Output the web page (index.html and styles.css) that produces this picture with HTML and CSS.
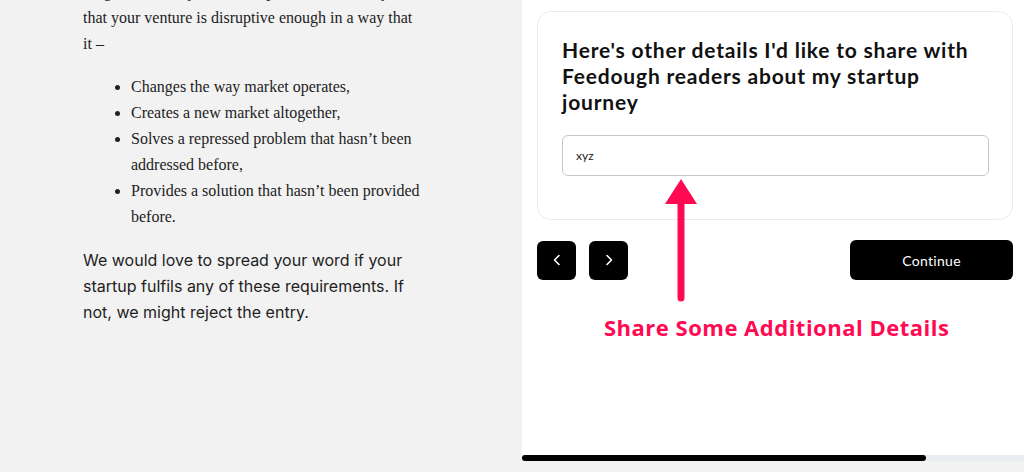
FILE: index.html
```html
<!DOCTYPE html>
<html>
<head>
<meta charset="utf-8">
<link rel="stylesheet" href="styles.css">
</head>
<body>
<div class="page">
  <div class="article">
    <div class="article-inner">
      <p class="serif">To get featured, you need to prove to us, clearly,</p>
      <p class="serif">that your venture is disruptive enough in a way that it –</p>
      <ul class="serif list">
        <li>Changes the way market operates,</li>
        <li>Creates a new market altogether,</li>
        <li>Solves a repressed problem that hasn’t been addressed before,</li>
        <li>Provides a solution that hasn’t been provided before.</li>
      </ul>
      <p class="sans">We would love to spread your word if your startup fulfils any of these requirements. If not, we might reject the entry.</p>
    </div>
  </div>
  <div class="side">
    <div class="panel">
      <div class="card">
        <h2 class="question">Here's other details I'd like to share with Feedough readers about my startup journey</h2>
        <div class="field">xyz</div>
      </div>
      <div class="nav">
        <div class="arrows">
          <button class="navbtn" aria-label="Previous">
            <svg width="14" height="14" viewBox="0 0 14 14"><path d="M9 2.5 L4.5 7 L9 11.5" fill="none" stroke="#fff" stroke-width="1.6" stroke-linecap="round" stroke-linejoin="round"/></svg>
          </button>
          <button class="navbtn" aria-label="Next">
            <svg width="14" height="14" viewBox="0 0 14 14"><path d="M5 2.5 L9.5 7 L5 11.5" fill="none" stroke="#fff" stroke-width="1.6" stroke-linecap="round" stroke-linejoin="round"/></svg>
          </button>
        </div>
        <button class="continue">Continue</button>
      </div>
      <svg class="pointer" width="34" height="126" viewBox="0 0 34 126">
        <line x1="17" y1="22" x2="17" y2="120" stroke="#ff0a52" stroke-width="7" stroke-linecap="round"/>
        <polygon points="17,1 33,26 1,26" fill="#ff0a52"/>
      </svg>
      <div class="callout">Share Some Additional Details</div>
    </div>
    <div class="progress"><div class="progress-fill" style="width:80.5%"></div></div>
  </div>
</div>
</body>
</html>
```

FILE: styles.css
```css
* { box-sizing: border-box; }
html, body { margin: 0; padding: 0; }
body {
  background: #f2f2f2;
  width: 1024px;
  height: 472px;
  overflow: hidden;
}
.page {
  display: flex;
  height: 472px;
}
.article {
  width: 522px;
  flex: none;
  overflow: hidden;
}
.article-inner {
  margin-top: -21px;
  padding-left: 83px;
  width: 421px;
  color: #222;
}
.serif {
  font-family: "Liberation Serif", "Times New Roman", serif;
  font-size: 16px;
  line-height: 26px;
  margin: 0;
  color: #222;
}
.list {
  margin: 17px 0 17px;
  padding-left: 48px;
}
.list li { padding-left: 0; }
.sans {
  font-family: Inter, "Noto Sans", sans-serif;
  font-size: 16px;
  line-height: 26px;
  margin: 0;
  width: 330px;
  color: #222;
}
.side {
  width: 502px;
  flex: none;
  display: flex;
  flex-direction: column;
}
.panel {
  position: relative;
  background: #fff;
  height: 455px;
  padding: 11px 11px 0 15px;
}
.card {
  border: 1px solid #e7ebf1;
  border-radius: 14px;
  padding: 25px 23px 43px 24px;
}
.question {
  margin: 0;
  font-family: Lato, "Noto Sans", sans-serif;
  font-weight: 700;
  font-size: 21px;
  letter-spacing: 0.8px;
  line-height: 26px;
  color: #111;
}
.field {
  margin-top: 20px;
  height: 41px;
  border: 1px solid #c3c8d0;
  border-radius: 6px;
  padding: 0 13px;
  display: flex;
  align-items: center;
  font-family: Lato, "Noto Sans", sans-serif;
  font-size: 12px;
  color: #222;
}
.nav {
  margin-top: 20px;
  display: flex;
  justify-content: space-between;
  align-items: center;
}
.arrows {
  display: flex;
  gap: 13px;
}
.navbtn {
  width: 39px;
  height: 39px;
  background: #000;
  border: none;
  border-radius: 6px;
  display: flex;
  align-items: center;
  justify-content: center;
  padding: 0;
}
.continue {
  width: 163px;
  height: 40px;
  background: #000;
  color: #fff;
  border: none;
  border-radius: 6px;
  font-family: Lato, "Noto Sans", sans-serif;
  font-size: 14px;
  letter-spacing: 0.3px;
}
.pointer {
  position: absolute;
  left: 142px;
  top: 178px;
}
.callout {
  position: absolute;
  left: 82px;
  top: 313px;
  font-family: "Open Sans", "Noto Sans", sans-serif;
  font-weight: 700;
  font-size: 22px;
  letter-spacing: 0.5px;
  line-height: 28px;
  color: #ff0a52;
  white-space: nowrap;
}
.progress {
  height: 6px;
  background: #e9ecf2;
}
.progress-fill {
  height: 6px;
  background: #000;
  border-radius: 3px;
}
```
